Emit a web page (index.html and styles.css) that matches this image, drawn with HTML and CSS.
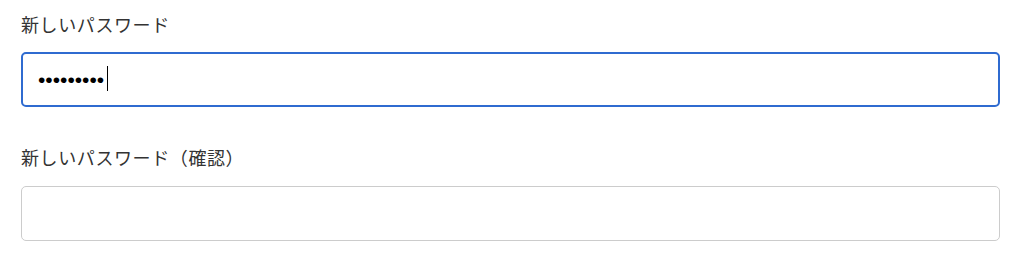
FILE: index.html
```html
<!DOCTYPE html>
<html lang="ja">
<head>
  <meta charset="UTF-8">
  <meta name="viewport" content="width=device-width, initial-scale=1.0">
  <title>パスワード変更</title>
  <link rel="stylesheet" href="styles.css">
</head>
<body>
  <form class="password-form">
    <div class="field">
      <label for="newPassword">新しいパスワード</label>
      <div class="input-wrap">
        <input type="password" id="newPassword" class="text-input is-focused" value="123456789">
        <span class="caret"></span>
      </div>
    </div>
    <div class="field">
      <label for="confirmPassword">新しいパスワード（確認）</label>
      <div class="input-wrap">
        <input type="password" id="confirmPassword" class="text-input">
      </div>
    </div>
  </form>
</body>
</html>
```

FILE: styles.css
```css
body {
  margin: 0;
  background-color: #ffffff;
  font-family: "Noto Sans CJK JP", "Noto Sans", sans-serif;
  color: #333333;
}
.password-form {
  padding: 11px 24px 0 21px;
}
.field {
  margin-bottom: 37px;
}
.field label {
  display: block;
  font-size: 18px;
  line-height: 27px;
  letter-spacing: 0.6px;
  margin-bottom: 14px;
}
.field + .field label {
  margin-bottom: 15px;
}
.input-wrap {
  position: relative;
}
.text-input {
  display: block;
  box-sizing: border-box;
  width: 100%;
  height: 55px;
  padding: 0 15px;
  border: 1px solid #cccccc;
  border-radius: 5px;
  font-family: "Liberation Sans", Arial, sans-serif;
  font-size: 21px;
  color: #000000;
  background-color: #ffffff;
  outline: none;
}
.text-input.is-focused {
  padding: 0 14px 0 15px;
  border: 2px solid #2f6bd0;
}
/* caret shown as in the focused state */
.caret {
  position: absolute;
  left: 86px;
  top: 14px;
  width: 1px;
  height: 25px;
  background-color: #000000;
}
```
